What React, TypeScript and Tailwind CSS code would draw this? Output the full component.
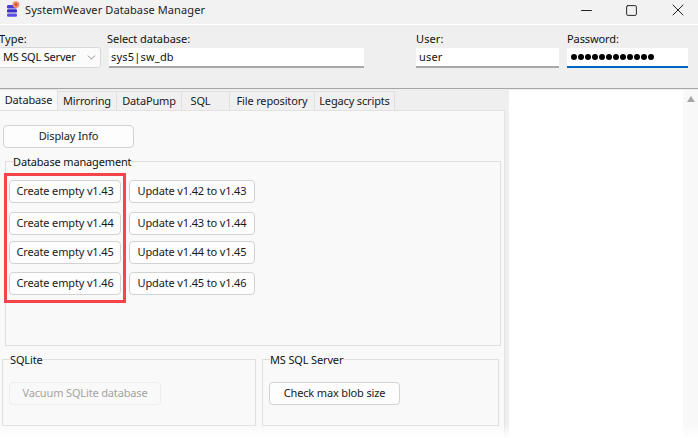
import { Minus, Square, X, ChevronDown } from "lucide-react";

const font = "font-['Noto_Sans',sans-serif]";

const rows = [
  { create: "Create empty v1.43", update: "Update v1.42 to v1.43", gap: "mb-[9px]" },
  { create: "Create empty v1.44", update: "Update v1.43 to v1.44", gap: "mb-[6px]" },
  { create: "Create empty v1.45", update: "Update v1.44 to v1.45", gap: "mb-[8px]" },
  { create: "Create empty v1.46", update: "Update v1.45 to v1.46", gap: "" },
];

const tabs = [
  { name: "Mirroring", width: "w-[59px]" },
  { name: "DataPump", width: "w-[65px]" },
  { name: "SQL", width: "w-[48px] pr-[10px]" },
  { name: "File repository", width: "w-[85px]" },
  { name: "Legacy scripts", width: "w-[80px]" },
];

function AppIcon() {
  return (
    <svg width="18" height="18" viewBox="0 0 18 18" className="shrink-0">
      <rect x="4" y="4" width="10" height="3.4" rx="1.2" fill="#4a3fd0" />
      <rect x="4" y="8.2" width="10" height="3.4" rx="1.2" fill="#3b2fc4" />
      <rect x="4" y="12.4" width="10" height="3.4" rx="1.2" fill="#5a4ee0" />
      <circle cx="13" cy="3.6" r="3.4" fill="#f08a6c" />
      <circle cx="13" cy="3.6" r="1.3" fill="#c8483a" />
    </svg>
  );
}

function WinButton({
  children,
  className = "",
  disabled = false,
}: {
  children: string;
  className?: string;
  disabled?: boolean;
}) {
  return (
    <button
      disabled={disabled}
      className={`flex items-center justify-center rounded-[4px] border text-[11px] tracking-[-0.15px] whitespace-nowrap ${
        disabled ? "border-[#ededed] bg-[#f9f9f9] text-[#a3a3a3]" : "border-[#d2d2d2] bg-[#fdfdfd] text-[#1a1a1a]"
      } ${className}`}
    >
      {children}
    </button>
  );
}

function Group({
  title,
  className,
  children,
}: {
  title: string;
  className: string;
  children: React.ReactNode;
}) {
  return (
    <fieldset className={`border border-[#dfdfdf] ${className}`}>
      <legend className="relative top-[1px] ml-[7px] text-[11px] leading-[14px] tracking-[-0.15px] text-[#111]">
        {title}
      </legend>
      {children}
    </fieldset>
  );
}

export default function App() {
  return (
    <div className={`relative h-[438px] w-[698px] overflow-hidden bg-white ${font}`}>
      {/* title bar */}
      <div className="flex h-[25px] items-center border-b border-white bg-[#f2f2f2] pb-[4px]">
        <div className="ml-[3px] flex items-center gap-[4px]">
          <AppIcon />
          <span className="text-[11px] tracking-[0.1px] text-[#1c1c1c]">SystemWeaver Database Manager</span>
        </div>
        <div className="ml-auto flex items-center text-[#222]">
          <Minus size={17} strokeWidth={1.4} className="mr-[30px]" />
          <Square size={13} strokeWidth={1.8} className="mr-[30px]" />
          <X size={20} strokeWidth={1.2} className="mr-[10px]" />
        </div>
      </div>

      {/* connection form */}
      <div className="flex h-[64px] items-start border-b border-[#a6a6a6] bg-[#efefef] pt-[5px] text-[11px] whitespace-nowrap text-[#111]">
        <div className="-ml-[1px] flex flex-col">
          <span className="h-[17px] leading-[17px] tracking-[0.1px]">Type:</span>
          <div className="-ml-[1px] flex h-[21px] w-[103px] items-center justify-between rounded-[3px] border border-[#d8d8d8] bg-[#fbfbfb] pr-[2px] pl-[4px] tracking-[-0.2px]">
            <span>MS SQL Server</span>
            <ChevronDown size={13} strokeWidth={1.2} className="text-[#555]" />
          </div>
        </div>
        <div className="ml-[6px] flex flex-col">
          <span className="h-[18px] leading-[17px] tracking-[-0.05px]">Select database:</span>
          <div className="ml-[2px] flex h-[20px] w-[255px] items-center border-b-2 border-[#a8a8a8] bg-white pl-[2px] tracking-[0.2px]">
            sys5|sw_db
          </div>
        </div>
        <div className="ml-[52px] flex flex-col">
          <span className="h-[18px] leading-[17px] tracking-[0.1px]">User:</span>
          <div className="flex h-[20px] w-[143px] items-center border-b-2 border-[#a8a8a8] bg-white pl-[3px] tracking-[0.2px]">
            user
          </div>
        </div>
        <div className="ml-[8px] flex flex-col">
          <span className="h-[18px] leading-[17px] tracking-[-0.1px]">Password:</span>
          <div className="flex h-[20px] w-[121px] items-center gap-[1px] border-b-2 border-[#0067c0] bg-white pl-[4px]">
            {Array.from({ length: 12 }).map((_, i) => (
              <span key={i} className="h-[6px] w-[6px] rounded-full bg-black" />
            ))}
          </div>
        </div>
      </div>

      {/* body */}
      <div className="flex h-[349px] bg-[#efefef]">
        <div className="w-[505px] shrink-0">
          <div className="flex h-[21px] items-end text-[11px] tracking-[-0.15px] whitespace-nowrap text-[#1a1a1a]">
            <div className="relative z-10 flex h-[21px] w-[58px] items-center justify-center border-t border-r border-[#e2e2e2] bg-[#f9f9f9]">
              Database
            </div>
            {tabs.map((tab) => (
              <div
                key={tab.name}
                className={`flex h-[19px] items-center justify-center border-t border-r border-[#e0e0e0] bg-[#f0f0f0] ${tab.width}`}
              >
                {tab.name}
              </div>
            ))}
          </div>
          <div className="h-[328px] border-t border-r border-[#e2e2e2] bg-[#f9f9f9] pt-[14px]">
            <WinButton className="ml-[3px] h-[23px] w-[131px]">Display Info</WinButton>

            <Group title="Database management" className="mt-[6px] ml-[5px] h-[192px] w-[496px]">
              <div className="flex flex-col pt-[12px] pl-[3px]">
                {rows.map((row) => (
                  <div key={row.create} className={`flex gap-[8px] ${row.gap}`}>
                    <WinButton className="h-[23px] w-[112px]">{row.create}</WinButton>
                    <WinButton className="h-[23px] w-[126px]">{row.update}</WinButton>
                  </div>
                ))}
              </div>
            </Group>

            <div className="mt-[6px] ml-[2px] flex gap-[6px]">
              <Group title="SQLite" className="h-[74px] w-[254px]">
                <WinButton disabled className="mt-[16px] ml-[6px] h-[23px] w-[152px]">
                  Vacuum SQLite database
                </WinButton>
              </Group>
              <Group title="MS SQL Server" className="h-[74px] w-[237px]">
                <WinButton className="mt-[16px] ml-[6px] h-[23px] w-[131px]">Check max blob size</WinButton>
              </Group>
            </div>
          </div>
        </div>

        {/* log pane */}
        <div className="mt-[1px] ml-[4px] flex flex-1 bg-white">
          <div className="flex-1" />
          <div className="flex w-[15px] justify-center bg-[#f8f8f8] pt-[6px]">
            <div className="h-0 w-0 border-x-[4px] border-b-[6px] border-x-transparent border-b-[#a6a6a6]" />
          </div>
        </div>
      </div>

      {/* red highlight drawn on top of the screenshot */}
      <div className="absolute top-[173px] left-[4px] h-[130px] w-[122px] border-[3px] border-[#f5444b]" />
      {/* bottom fade */}
      <div className="absolute right-0 bottom-0 left-0 h-[14px] bg-gradient-to-b from-transparent to-white" />
    </div>
  );
}
